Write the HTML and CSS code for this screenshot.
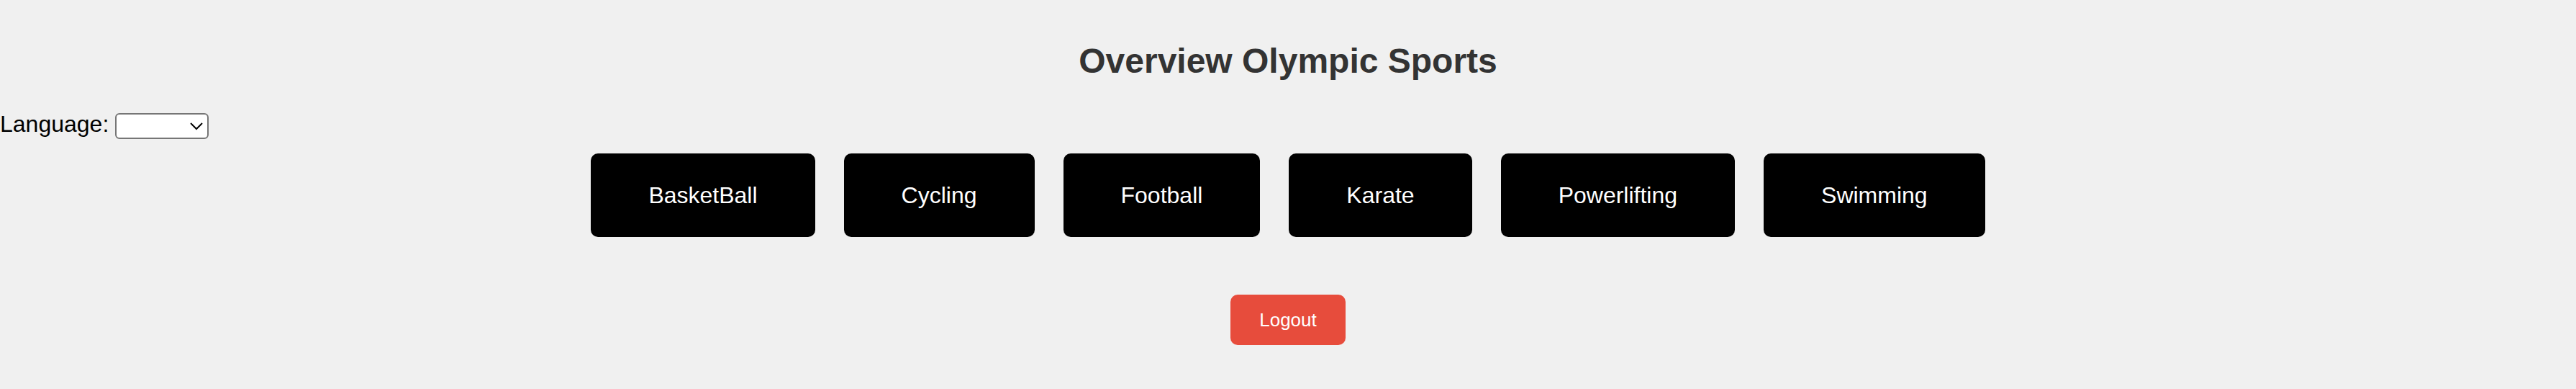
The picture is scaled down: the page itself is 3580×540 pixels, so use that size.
FILE: index.html
```html
<!DOCTYPE html>
<html lang="en">
<head>
<meta charset="utf-8">
<title>Overview Olympic Sports</title>
<link rel="stylesheet" href="styles.css">
</head>
<body>
  <h1 class="title">Overview Olympic Sports</h1>
  <div class="lang-row">
    <label class="lang-label" for="lang">Language:</label>
    <select id="lang" class="lang-select"></select>
  </div>
  <div class="sports">
    <button class="sport-btn">BasketBall</button>
    <button class="sport-btn">Cycling</button>
    <button class="sport-btn">Football</button>
    <button class="sport-btn">Karate</button>
    <button class="sport-btn">Powerlifting</button>
    <button class="sport-btn">Swimming</button>
  </div>
  <div class="logout-row">
    <button class="logout-btn">Logout</button>
  </div>
</body>
</html>
```
FILE: styles.css
```css
html {
  zoom: 2;
}
body {
  margin: 0;
  background: #f0f0f0;
  font-family: "Liberation Sans", Arial, sans-serif;
}
.title {
  margin: 29px 0 0;
  text-align: center;
  font-size: 24px;
  line-height: 27px;
  font-weight: bold;
  color: #333;
}
.lang-row {
  margin-top: 21px;
  font-size: 16px;
  color: #000;
}
.lang-label {
  font-family: "Liberation Sans", Arial, sans-serif;
}
.lang-select {
  width: 65px;
  height: 18px;
  font-family: "Liberation Sans", Arial, sans-serif;
  font-size: 13px;
  background: #fff;
  border: 1px solid #767676;
  border-radius: 3px;
  vertical-align: middle;
}
.sports {
  display: flex;
  justify-content: center;
  gap: 20px;
  margin-top: 10px;
}
.sport-btn {
  padding: 20px 40px;
  background: #000;
  color: #fff;
  border: none;
  border-radius: 5px;
  font-family: "Liberation Sans", Arial, sans-serif;
  font-size: 16px;
  line-height: 18px;
}
.logout-row {
  margin-top: 40px;
  text-align: center;
}
.logout-btn {
  padding: 10px 20px;
  background: #e74c3c;
  color: #fff;
  border: none;
  border-radius: 5px;
  font-family: "Liberation Sans", Arial, sans-serif;
  font-size: 13px;
  line-height: 15px;
}
```
